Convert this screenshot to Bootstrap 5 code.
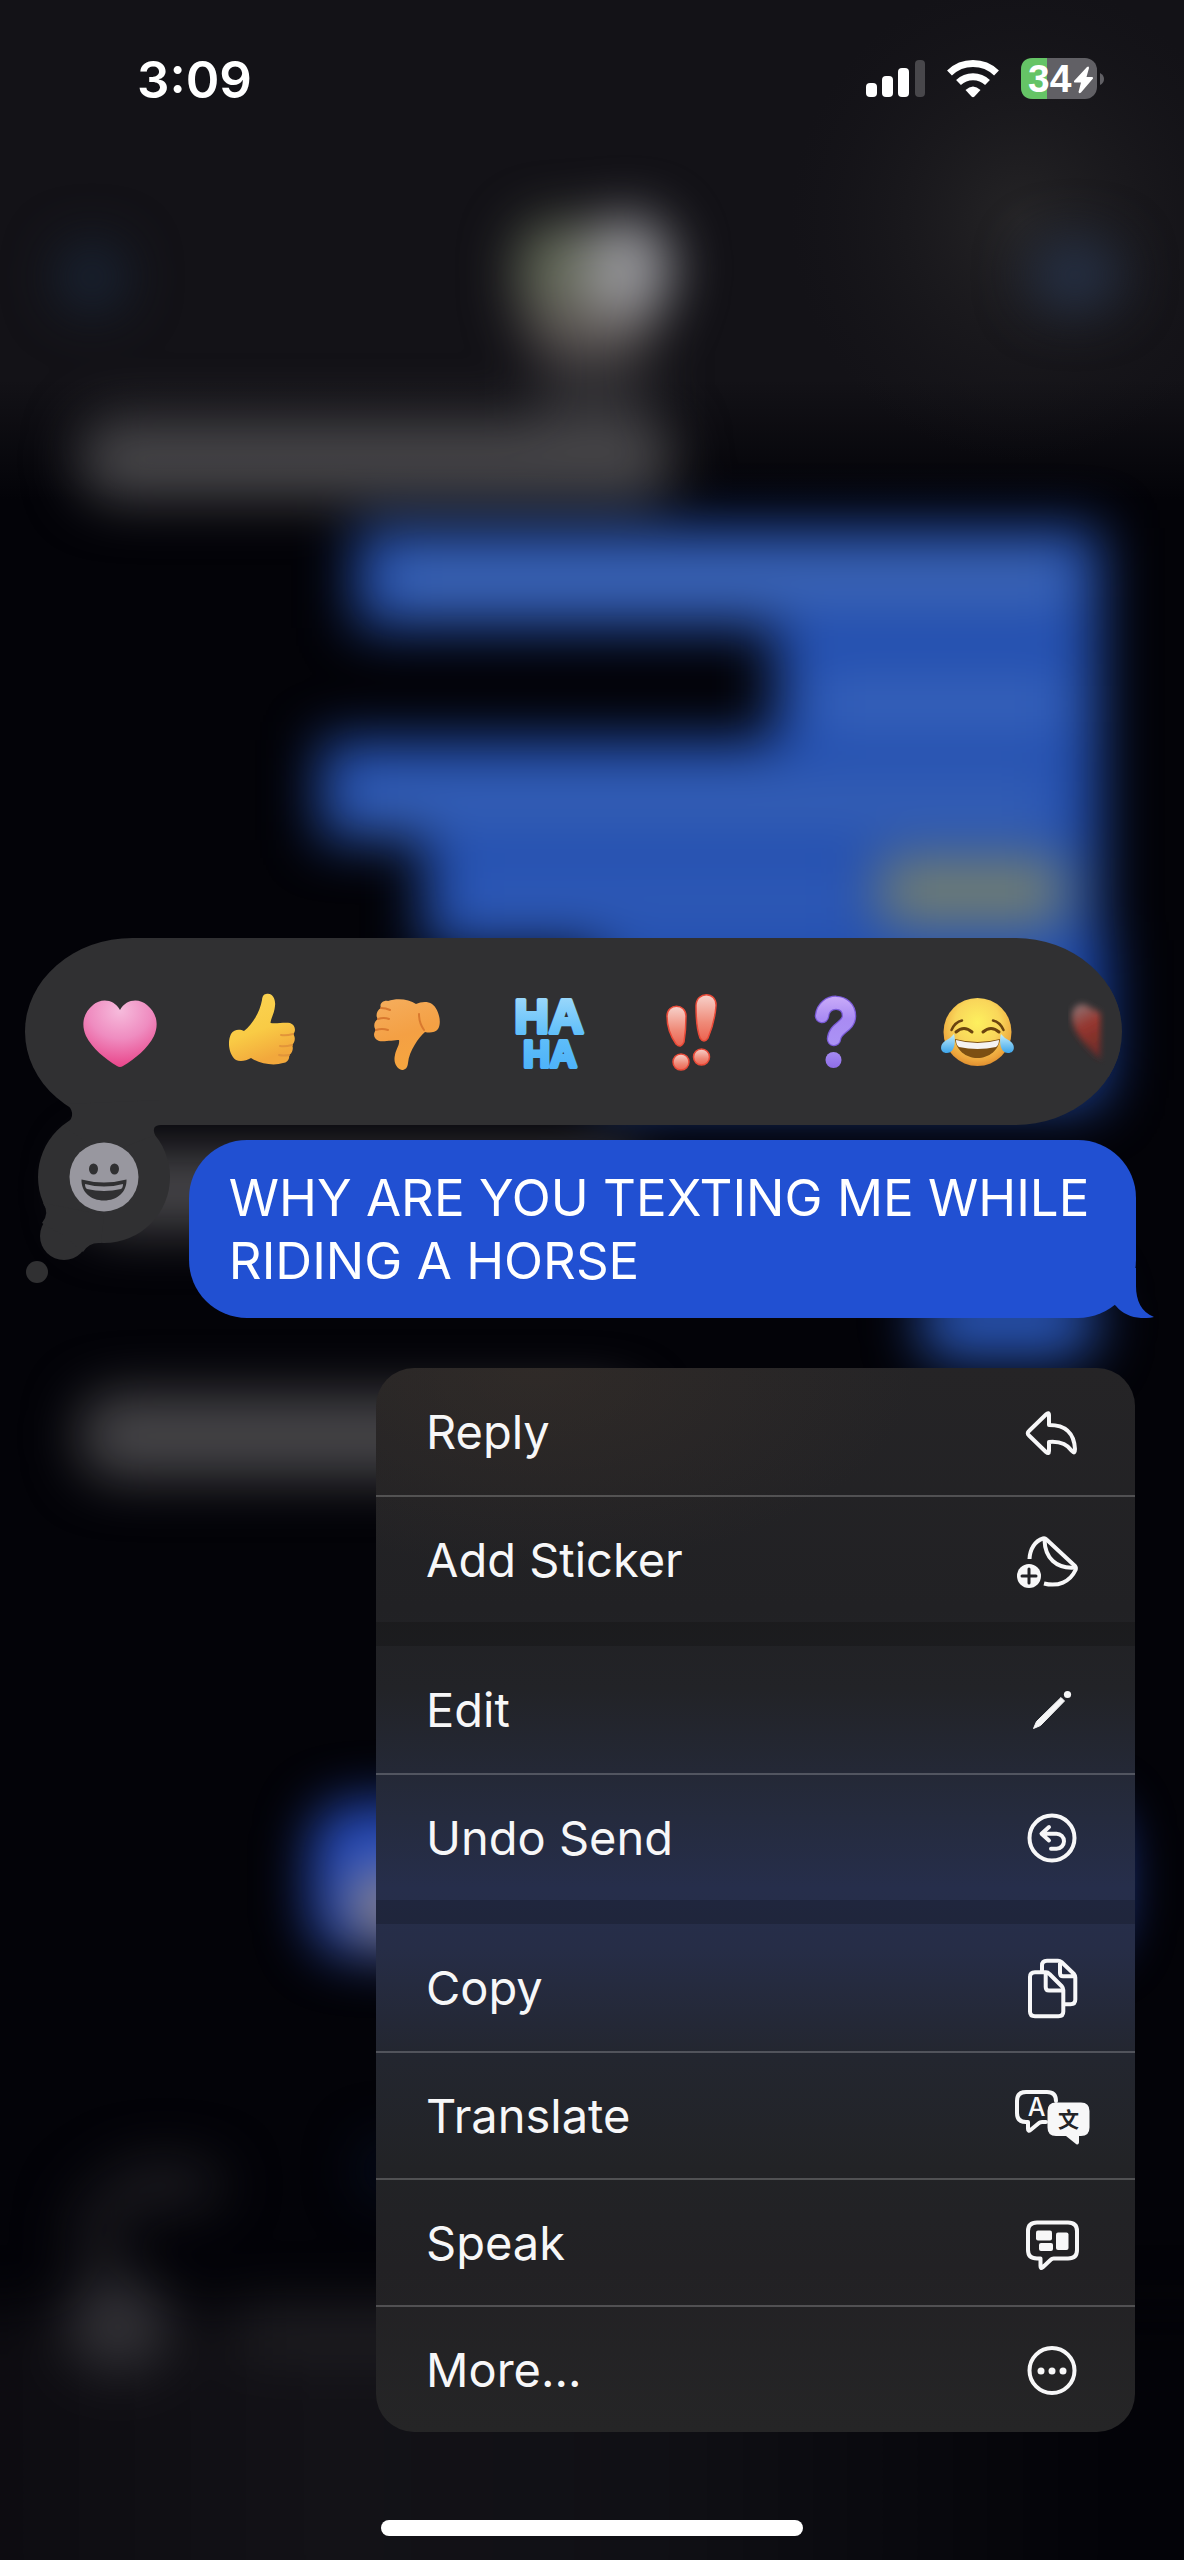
<!DOCTYPE html>
<html lang="en">
<head>
<meta charset="utf-8">
<meta name="viewport" content="width=device-width, initial-scale=1">
<title>Messages</title>
<link href="https://cdn.jsdelivr.net/npm/bootstrap@5.3.0/dist/css/bootstrap.min.css" rel="stylesheet">
<style>
  body { background: #030308; color: #fff; font-family: Inter, "Liberation Sans", sans-serif; font-size: 51px; }
  .phone { min-height: 100vh; overflow: hidden; }
  .backdrop { inset: 0; z-index: 0; }
  .layer { z-index: 1; }
  .statusbar { height: 158px; padding: 0 80px 0 137px; font-size: 51px; font-weight: 600; line-height: 1; }
  .tray { margin: 780px 62px 0 25px; }
  .tray-pill { background: #303032; border-radius: 108px / 94px; height: 187px; padding: 0 14px 0 23px; overflow: hidden; }
  .tap { background: none; border: 0; padding: 0; flex: 0 0 143px; display: flex; justify-content: center; align-items: center; }
  .tap-next { justify-content: flex-start; padding-left: 11px; }
  .tray-tail { left: 0; top: 157px; }
  .tray-emoji { left: 44px; top: 204px; width: 70px; height: 70px; }
  .bubble { background: #2150d2; border-radius: 58px; max-width: 80%; margin: 15px 48px 0 auto; padding: 26px 30px 26px 40px; line-height: 63px; }
  .bubble-tail { right: -19px; bottom: 0; }
  .actions { width: 759px; margin: 50px 49px 0 auto; border-radius: 38px; overflow: hidden; font-size: 47px;
    background: radial-gradient(ellipse 380px 200px at 160px 0, rgba(60,50,42,.45), transparent),
      linear-gradient(#252426 0, #212124 240px, #222327 320px, #252b3e 450px, #262e4b 520px, #262d47 580px, #23262f 690px, #222326 800px, #222124 900px, #252526 1064px); }
  .action { height: 127px; padding: 0 41px 0 50px; background: none; border: 0; color: #f7f7f8; line-height: 1; display: flex; align-items: center; justify-content: space-between; width: 100%; text-align: left; }
  .action + .action { border-top: 2px solid rgba(255,255,255,.21); }
  .gap-band { height: 24px; background: rgba(0,0,0,.17); }
  .home-bar { width: 422px; height: 16px; margin: 88px auto 24px; background: #fff; }
  .ln { fill: none; stroke: #f7f7f8; stroke-width: 4; stroke-linejoin: round; stroke-linecap: round; }
  .solid { fill: #f7f7f8; }
</style>
<script src="https://cdn.jsdelivr.net/npm/bootstrap@5.3.0/dist/js/bootstrap.bundle.min.js"></script>
</head>
<body>
<div class="phone position-relative d-flex flex-column">
  <!-- blurred conversation behind the menu -->
  <svg class="backdrop position-absolute w-100 h-100" viewBox="0 0 1184 2560" preserveAspectRatio="none" aria-hidden="true">
    <defs>
      <filter id="soft" filterUnits="userSpaceOnUse" x="-200" y="-200" width="1584" height="2960" color-interpolation-filters="sRGB"><feGaussianBlur stdDeviation="27"/></filter>
      <linearGradient id="top" x1="0" y1="0" x2="0" y2="1"><stop offset="0" stop-color="#131217"/><stop offset=".76" stop-color="#131217"/><stop offset="1" stop-color="#131217" stop-opacity="0"/></linearGradient>
      <linearGradient id="foot" x1="0" y1="0" x2="1" y2="0"><stop offset="0" stop-color="#0c0b10"/><stop offset=".3" stop-color="#131217"/><stop offset=".55" stop-color="#101015"/><stop offset=".9" stop-color="#030308"/></linearGradient>
      <radialGradient id="warm"><stop offset="0" stop-color="#252426"/><stop offset="1" stop-color="#19181c" stop-opacity="0"/></radialGradient>
    </defs>
    <rect width="1184" height="500" fill="url(#top)"/>
    <ellipse cx="1020" cy="220" rx="230" ry="240" fill="url(#warm)"/>
    <g filter="url(#soft)">
      <rect x="-60" y="2310" width="1300" height="320" fill="url(#foot)"/>
      <circle cx="92" cy="277" r="33" fill="#1a2638"/>
      <ellipse cx="1075" cy="275" rx="45" ry="35" fill="#263249"/>
      <ellipse cx="590" cy="296" rx="70" ry="72" fill="#625b58"/>
      <ellipse cx="556" cy="265" rx="40" ry="44" fill="#646b58"/>
      <ellipse cx="628" cy="268" rx="44" ry="52" fill="#98989c"/>
      <rect x="540" y="355" width="110" height="80" fill="#2a292d"/>
      <rect x="80" y="418" width="593" height="82" rx="34" fill="#474649"/>
      <path d="M356 528H1100V1105H600V950H424V840H320V740H775V628H356Z" fill="#2450b0"/>
      <rect x="390" y="558" width="680" height="44" fill="#426ab6"/>
      <rect x="815" y="682" width="250" height="44" fill="#3b66bc"/>
      <rect x="350" y="780" width="700" height="44" fill="#3862b6"/>
      <rect x="460" y="880" width="390" height="40" fill="#315cb8"/>
      <rect x="880" y="858" width="184" height="66" fill="#75806f"/>
      <rect x="1085" y="940" width="24" height="140" fill="#1740a2"/>
      <rect x="80" y="1150" width="560" height="80" rx="34" fill="#474649"/>
      <rect x="920" y="1280" width="175" height="80" rx="30" fill="#2853b0"/>
      <rect x="80" y="1394" width="560" height="84" rx="34" fill="#474649"/>
      <rect x="312" y="1804" width="805" height="150" rx="40" fill="#274dc0"/>
      <circle cx="386" cy="1905" r="36" fill="#9a8a7e"/>
      <ellipse cx="165" cy="2185" rx="60" ry="24" fill="#1d1c21"/>
      <ellipse cx="100" cy="2235" rx="28" ry="50" fill="#17161b"/>
      <ellipse cx="118" cy="2325" rx="52" ry="46" fill="#323136"/>
      <rect x="240" y="2306" width="400" height="48" fill="#201f23"/>
      <circle cx="390" cy="2170" r="30" fill="#050d20"/>
    </g>
  </svg>

  <header class="layer statusbar d-flex align-items-center justify-content-between">
    <time>3:09</time>
    <svg width="240" height="60" viewBox="0 0 240 60" role="img" aria-label="Signal, Wi-Fi, battery 34 percent">
      <g fill="#fff"><rect x="2" y="34" width="11" height="14" rx="4"/><rect x="18" y="27" width="11" height="21" rx="4"/><rect x="34" y="19" width="11" height="29" rx="4"/></g>
      <rect x="51" y="11" width="10" height="37" rx="4" fill="#48474b"/>
      <g fill="none" stroke="#fff" stroke-width="7"><path d="M85.500 24A34 34 0 0 1 132.500 24"/><path d="M94.500 33.500A21 21 0 0 1 123.500 33.500"/></g>
      <path d="M101.500 41Q109 34 116.500 41L110.500 47.500Q109 49 107.500 47.500Z" fill="#fff"/>
      <rect x="157" y="9" width="76" height="41" rx="12" fill="#616065"/>
      <path d="M183 9H169Q157 9 157 21V38Q157 50 169 50H183Z" fill="#65c466"/>
      <path d="M236 24Q240 26 240 30T236 36Z" fill="#616065"/>
      <text x="164" y="43" font-family="'Liberation Sans', sans-serif" font-size="39" font-weight="700" fill="#fff">34</text>
      <path d="M223 18L210 32Q209.500 33.500 211 33.500H217L214.500 43Q215 45 217 43.500L229 29.500Q229.500 28 228 28H222.500L225 19Q225 16.500 223 18Z" fill="#fff"/>
    </svg>
  </header>

  <main class="layer">
    <section class="tray position-relative" aria-label="Reactions">
      <div class="tray-pill d-flex align-items-stretch">
        <button class="tap" type="button" aria-label="Heart"><svg width="90" height="90" viewBox="0 0 90 90">
          <defs><radialGradient id="hp" cx=".5" cy=".15" r=".85"><stop offset="0" stop-color="#f6bbdc"/><stop offset=".5" stop-color="#ef8cc0"/><stop offset="1" stop-color="#e9458a"/></radialGradient></defs>
          <path d="M45 23C39 12 26 11 18 18C8 26 6 38 11 49C17 61 30 72 42 79Q45 81 48 79C60 72 73 61 79 49C84 38 82 26 72 18C64 11 51 12 45 23Z" fill="url(#hp)"/></svg></button>
        <button class="tap" type="button" aria-label="Thumbs up"><svg width="90" height="90" viewBox="0 0 90 90">
          <defs><linearGradient id="tu" x1="0" y1="0" x2=".35" y2="1"><stop offset="0" stop-color="#fbd554"/><stop offset=".6" stop-color="#f9cb45"/><stop offset="1" stop-color="#f2a83c"/></linearGradient></defs>
          <path d="M48 7C54 5 58 12 57 19C56.500 26 53 31 52.500 36C58 37 66 35 72 36C78 38 78 45 75 47C78 50 77 56 74 58C76 61 74 67 71 68C72 72 69 76 65 76C56 79 42 77 33 71C28 74 22 75 18 73C11 68 9 55 13 47C16 42 22 42 26 44C34 38 42 25 44 13C44.500 9 45.500 7.500 48 7Z" fill="url(#tu)"/>
          <path d="M75 47Q68 49 63 48M74 58Q67 60 62 59M71 68Q65 69 61 68" fill="none" stroke="#e2953a" stroke-width="2" stroke-linecap="round"/></svg></button>
        <button class="tap" type="button" aria-label="Thumbs down"><svg width="90" height="90" viewBox="0 0 90 90">
          <defs><linearGradient id="td" x1=".3" y1="0" x2=".6" y2="1"><stop offset="0" stop-color="#f5ac5a"/><stop offset=".5" stop-color="#f4a044"/><stop offset="1" stop-color="#f6a63e"/></linearGradient></defs>
          <path d="M41 83C36 82 32 76 34 68C35 62 39 58 38 53C33 53 23 55 18 54C12 52 12 46 15 43C12 40 13 34 17 32C14 29 16 23 20 21C18 17 22 13 27 14C36 11 48 12 55 17C60 15 66 14 71 17C78 22 81 36 77 42C74 46 68 46 64 45C58 50 48 64 47 76C46.500 81 44 83 41 83Z" fill="url(#td)"/>
          <path d="M15 43Q21 41 27 43M17 32Q23 30 28 32M20 21Q25 21 29 23M63 43Q58 36 58 27" fill="none" stroke="#d9792f" stroke-width="2" stroke-linecap="round"/></svg></button>
        <button class="tap" type="button" aria-label="Haha"><svg width="90" height="90" viewBox="0 0 90 90">
          <defs><linearGradient id="ha" x1="0" y1="0" x2="0" y2="1"><stop offset="0" stop-color="#a5dcfb"/><stop offset=".5" stop-color="#62c0fa"/><stop offset="1" stop-color="#4ab0f8"/></linearGradient></defs>
          <text font-family="'Liberation Sans', sans-serif" font-weight="700" text-anchor="middle" fill="url(#ha)" stroke="url(#ha)" stroke-width="4" stroke-linejoin="round"><tspan x="45" y="46" font-size="48">HA</tspan><tspan x="46" y="80" font-size="37">HA</tspan></text></svg></button>
        <button class="tap" type="button" aria-label="Emphasize"><svg width="90" height="90" viewBox="0 0 90 90">
          <defs><linearGradient id="ex" x1="0" y1="0" x2="0" y2="1"><stop offset="0" stop-color="#f7d2cb"/><stop offset=".6" stop-color="#ef8a78"/><stop offset="1" stop-color="#ec6350"/></linearGradient></defs>
          <g fill="url(#ex)" stroke="#e94a38" stroke-width="1.500"><path d="M20 29C20 16 39 16 39 29C39 40 38 49 37 55Q34 62 29 57C24 50 20 40 20 29Z"/><path d="M49 19C49 4 70 4 69 19C68 32 64 44 61 51Q57 57 53 51C50 43 49 31 49 19Z"/><circle cx="34" cy="75" r="8"/><circle cx="54.500" cy="70" r="8"/></g></svg></button>
        <button class="tap" type="button" aria-label="Question"><svg width="90" height="90" viewBox="0 0 90 90">
          <defs><linearGradient id="qu" gradientUnits="userSpaceOnUse" x1="0" y1="10" x2="0" y2="82"><stop offset="0" stop-color="#c9abf9"/><stop offset=".3" stop-color="#a98bf3"/><stop offset=".7" stop-color="#ab93f5"/><stop offset="1" stop-color="#8d6be6"/></linearGradient></defs>
          <path d="M32 29C34 11 59 12 59 29C59 40 45 40 44 52" fill="none" stroke="#7a5bd8" stroke-width="14.500" stroke-linecap="round"/>
          <path d="M32 29C34 11 59 12 59 29C59 40 45 40 44 52" fill="none" stroke="url(#qu)" stroke-width="12" stroke-linecap="round"/>
          <circle cx="43.500" cy="73" r="8" fill="url(#qu)"/></svg></button>
        <button class="tap" type="button" aria-label="Tears of joy"><svg width="90" height="90" viewBox="0 0 90 90">
          <defs><radialGradient id="jo" cx=".5" cy=".36" r=".66"><stop offset="0" stop-color="#fdf05e"/><stop offset=".5" stop-color="#f9d65a"/><stop offset=".85" stop-color="#eda53c"/><stop offset="1" stop-color="#dc8a2c"/></radialGradient><linearGradient id="te" x1="0" y1="0" x2="0" y2="1"><stop offset="0" stop-color="#c5effc"/><stop offset="1" stop-color="#3da5ea"/></linearGradient></defs>
          <circle cx="44.500" cy="45" r="34" fill="url(#jo)"/>
          <g fill="none" stroke="#6b430f" stroke-width="2.500" stroke-linecap="round"><path d="M18.500 43Q22 35 29 33.500M70.500 43Q67 35 60 33.500"/><path d="M23 45Q31 38 39 45M50 45Q58 38 66 45" stroke-width="3"/></g>
          <path d="M22 52Q44.500 58 67 52C66 63 56 71 44.500 71S23 63 22 52Z" fill="#7c4f12"/>
          <path d="M23 53Q44.500 59 66 53Q66 58 63 60Q44.500 64 26 60Q23 58 23 53Z" fill="#f5f3f2"/>
          <path d="M21 47C23 54 22 66 14 66C6 66 7 57 12 54Q18 51 21 47ZM68 47C66 54 67 66 75 66C83 66 82 57 77 54Q71 51 68 47Z" fill="url(#te)"/></svg></button>
        <button class="tap tap-next" type="button" aria-label="Red heart"><svg width="60" height="90" viewBox="0 0 60 90">
          <defs><filter id="bl"><feGaussianBlur stdDeviation="3"/></filter><linearGradient id="hr" x1=".3" y1="0" x2=".6" y2="1"><stop offset="0" stop-color="#8f6f6f"/><stop offset=".4" stop-color="#96362e"/><stop offset="1" stop-color="#6a2b29"/></linearGradient><linearGradient id="hf" x1="0" y1="0" x2="1" y2="0"><stop offset=".6" stop-color="#303032" stop-opacity="0"/><stop offset=".78" stop-color="#303032"/></linearGradient></defs>
          <path d="M12 31C11 20 20 14 28 19Q33 23 44 26L44 72Q38 72 29 61C20 52 13 42 12 31Z" fill="url(#hr)" filter="url(#bl)"/><rect width="60" height="90" fill="url(#hf)"/></svg></button>
      </div>
      <svg class="tray-tail position-absolute" width="160" height="195" viewBox="0 0 160 195" fill="#303032" aria-hidden="true">
        <circle cx="79" cy="82" r="66"/><circle cx="39" cy="141" r="24"/><circle cx="12" cy="177" r="11"/>
        <path d="M42 9Q48 15 47 21Q46 26 38 31L79 60L130 40Q126 30 136 30V5Z"/><path d="M18 108Q25 118 17 128L39 141L58 157Q64 147 76 148L79 120Z"/>
      </svg>
      <button class="tap tray-emoji position-absolute" type="button" aria-label="Choose emoji"><svg width="70" height="70" viewBox="0 0 70 70">
        <circle cx="35" cy="35" r="34.500" fill="#98979f"/><g fill="#303032"><ellipse cx="24.500" cy="27" rx="4.500" ry="5.500"/><ellipse cx="45.500" cy="27" rx="4.500" ry="5.500"/><path d="M12.500 37.500Q35 43.500 57.500 37.500C58 50 48 58.500 35 58.500S12 50 12.500 37.500Z"/></g>
        <path d="M16 42Q35 47 54 42Q54 46 52 47Q35 51 18 47Q16 46 16 42Z" fill="#98979f"/></svg></button>
    </section>

    <p class="bubble position-relative">WHY ARE YOU TEXTING ME WHILE RIDING A HORSE
      <svg class="bubble-tail position-absolute" width="60" height="50" viewBox="0 0 60 50" aria-hidden="true"><path d="M41 0V18C41 32 46 44 59 49C45 52 30 49 21 38L8 25V0Z" fill="#2150d2"/></svg>
    </p>

    <div class="actions" role="menu">
      <button class="action" type="button" role="menuitem">Reply<svg width="84" height="84" viewBox="0 0 84 84"><path class="ln" d="M39 25.500Q39 21.500 36 24.500L19 41Q16.500 43.300 19 45.500L36 62Q39 64.500 39 61V52C50 51 57 54 62 61Q65 64.500 65 59C64 43 56 35 39 35Z"/></svg></button>
      <button class="action" type="button" role="menuitem">Add Sticker<svg width="84" height="84" viewBox="0 0 84 84"><g class="ln"><path d="M19.500 41C20 31 25 23 33 20.500Q35 20 36.500 21.500L65 48Q66.500 50 65.500 52C60 64 48 69 34 65.500" stroke-linecap="butt"/><path d="M34.500 22C35 40 46 51 65 49.500"/></g><circle class="solid" cx="19" cy="58" r="12"/><path d="M19 51V65M12 58H26" stroke="#222226" stroke-width="3" stroke-linecap="round"/></svg></button>
      <div class="gap-band"></div>
      <button class="action" type="button" role="menuitem">Edit<svg width="84" height="84" viewBox="0 0 84 84"><g class="solid"><path d="M23.500 60.500L26.500 53.500L51 29.500L54.500 33L30.500 57.500Z" stroke="#f7f7f8" stroke-linejoin="round"/><circle cx="57.500" cy="26.500" r="3.600"/></g></svg></button>
      <button class="action" type="button" role="menuitem">Undo Send<svg width="84" height="84" viewBox="0 0 84 84"><g class="ln"><circle cx="42" cy="42" r="22.500"/><path d="M39 31L31.500 37.700L39 44.500M32 37.700H46.500A7.500 7.500 0 0 1 46.500 52.700H41"/></g></svg></button>
      <div class="gap-band"></div>
      <button class="action" type="button" role="menuitem">Copy<svg width="84" height="84" viewBox="0 0 84 84"><g class="ln"><path d="M32 25V19.500Q32 14.700 37 14.700H48Q50 14.700 51.500 16L64 28Q65.300 29.500 65.300 31.500V53.500Q65.300 58.300 60.500 58.300H55M50 16V27Q50 30.300 53 30.300H64"/><path d="M25 26.300H36Q38 26.300 39.500 28L52 40.500Q53.300 42 53.300 44V65.500Q53.300 70.300 48.500 70.300H25Q20 70.300 20 65.500V31Q20 26.300 25 26.300ZM35.700 28V41Q35.700 44.500 39 44.500H52"/></g></svg></button>
      <button class="action" type="button" role="menuitem">Translate<svg width="84" height="84" viewBox="0 0 84 84"><path class="ln" d="M46 27V27Q46 18 37 18H16Q7 18 7 27V39Q7 48 16 48H18V55Q18 58 20.500 56L29 49Q30 48 32 48H36"/><text class="solid" x="26.500" y="42" text-anchor="middle" font-family="Inter, sans-serif" font-size="25" font-weight="500">A</text><path class="solid" d="M46 28.500H71Q79.500 28.500 79.500 37V53.500Q79.500 62 71 62H69V68.500Q68.500 71.500 66 70L56 62H46Q37.500 62 37.500 53.500V37Q37.500 28.500 46 28.500Z"/><text x="58.500" y="53" text-anchor="middle" font-family="'Noto Sans CJK SC', sans-serif" font-size="21" font-weight="700" fill="#222327">文</text></svg></button>
      <button class="action" type="button" role="menuitem">Speak<svg width="84" height="84" viewBox="0 0 84 84"><path class="ln" d="M27 21.500H58Q67 21.500 67 30V49Q67 57.500 58 57.500H43.500Q42 57.500 41 58.500L32.500 66.500Q30.500 68 30.500 65V57.500H27Q18 57.500 18 49V30Q18 21.500 27 21.500Z"/><g class="solid"><rect x="26" y="29.500" width="16" height="10" rx="2"/><rect x="29" y="42" width="14" height="8" rx="2"/><rect x="46" y="31.500" width="12.500" height="17.500" rx="2"/></g></svg></button>
      <button class="action" type="button" role="menuitem">More...<svg width="84" height="84" viewBox="0 0 84 84"><circle class="ln" cx="42" cy="42.500" r="22.500"/><g class="solid"><circle cx="31" cy="43" r="3.500"/><circle cx="42" cy="43" r="3.500"/><circle cx="53" cy="43" r="3.500"/></g></svg></button>
    </div>
  </main>
  <div class="layer home-bar rounded-pill"></div>
</div>
</body>
</html>
